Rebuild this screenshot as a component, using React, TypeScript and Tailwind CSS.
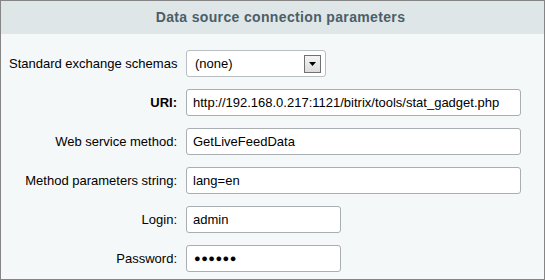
import React from 'react';

const inputCls =
    'h-[27px] rounded-[3px] border border-[#a9aeb3] bg-white px-[6px] text-[13px] text-black outline-none';

const Row = ({ label, bold, children }: { label: string; bold?: boolean; children: React.ReactNode }) => (
    <>
        <label className={`whitespace-nowrap pl-[8px] text-right text-black ${bold ? 'font-bold' : ''}`}>{label}</label>
        <div className="flex">{children}</div>
    </>
);

export default function App() {
    return (
        <div className="h-[280px] w-[545px] border border-[#858585] bg-[#f4f8f9] font-['Liberation_Sans',Arial,sans-serif] text-[13px]">
            {/* Header */}
            <div className="flex h-[33px] items-center justify-center bg-[#dfe6e8] pl-[16px] text-[14px] font-bold tracking-[0.35px] text-[#4c5e67]">
                Data source connection parameters
            </div>

            {/* Form */}
            <div className="grid grid-cols-[176px_1fr] items-center gap-x-[9px] gap-y-[12px] pt-[16px]">
                <Row label="Standard exchange schemas">
                    <div className="flex h-[27px] w-[140px] items-center justify-between rounded-[3px] border border-[#b9bec3] bg-white pr-[4px] pl-[8px] text-black">
                        <span>(none)</span>
                        <span className="flex h-[18px] w-[17px] items-center justify-center border border-[#707070] bg-gradient-to-b from-[#f4f4f4] to-[#dcdcdc]">
                            <svg width="7" height="4" viewBox="0 0 7 4">
                                <path d="M0 0h7L3.5 4z" fill="#000" />
                            </svg>
                        </span>
                    </div>
                </Row>
                <Row label="URI:" bold>
                    <input
                        className={`${inputCls} w-[335px]`}
                        readOnly
                        defaultValue="http://192.168.0.217:1121/bitrix/tools/stat_gadget.php"
                    />
                </Row>
                <Row label="Web service method:">
                    <input className={`${inputCls} w-[335px]`} readOnly defaultValue="GetLiveFeedData" />
                </Row>
                <Row label="Method parameters string:">
                    <input className={`${inputCls} w-[335px]`} readOnly defaultValue="lang=en" />
                </Row>
                <Row label="Login:">
                    <input className={`${inputCls} w-[155px]`} readOnly defaultValue="admin" />
                </Row>
                <Row label="Password:">
                    <div className={`${inputCls} flex w-[155px] items-center gap-[2px] pl-[7px]`}>
                        <span className="text-[11px] leading-none tracking-[0.5px]">●●●●●●</span>
                    </div>
                </Row>
            </div>
        </div>
    );
}
